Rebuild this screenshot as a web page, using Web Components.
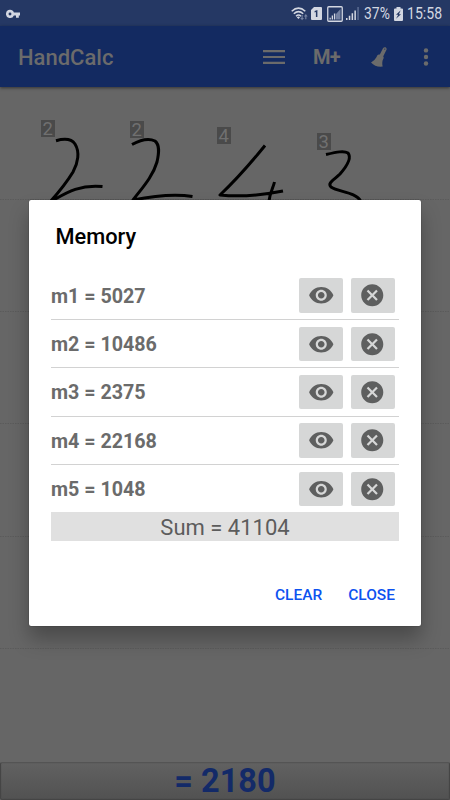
<!DOCTYPE html>
<html lang="en">
<head>
<meta charset="utf-8">
<title>HandCalc</title>
<style>
  html, body {
    margin: 0;
    height: 100%;
    overflow: hidden;
    background: #666;
    font-family: Roboto, "Liberation Sans", sans-serif;
  }
</style>
</head>
<body>
<hand-calc>
  <status-bar slot="status" battery="37%" time="15:58"></status-bar>
  <app-bar slot="bar">HandCalc</app-bar>
  <ink-canvas slot="canvas">
    <ink-tag x="41" y="120">2</ink-tag>
    <ink-tag x="130" y="121">2</ink-tag>
    <ink-tag x="217" y="127">4</ink-tag>
    <ink-tag x="317" y="132.500">3</ink-tag>
  </ink-canvas>
  <result-bar slot="result">= 2180</result-bar>
  <memory-dialog slot="dialog" heading="Memory">
    <memory-row>m1 = 5027</memory-row>
    <memory-row>m2 = 10486</memory-row>
    <memory-row>m3 = 2375</memory-row>
    <memory-row>m4 = 22168</memory-row>
    <memory-row>m5 = 1048</memory-row>
    <span slot="sum">Sum = 41104</span>
    <flat-button slot="actions">CLEAR</flat-button>
    <flat-button slot="actions">CLOSE</flat-button>
  </memory-dialog>
</hand-calc>

<script>
// Small helper: every element renders its markup once into an open root
class BaseElement extends HTMLElement {
  connectedCallback() {
    if (this.shadowRoot) return;
    this.attachShadow({ mode: 'open' });
    this.shadowRoot.innerHTML = this.render();
  }
}

// Page shell
class HandCalc extends BaseElement {
  render() {
    return `
      <style>
        :host {
          display: flex;
          flex-direction: column;
          height: 800px;
          width: 450px;
          position: relative;
        }
      </style>
      <slot name="status"></slot>
      <slot name="bar"></slot>
      <slot name="canvas"></slot>
      <slot name="result"></slot>
      <slot name="dialog"></slot>
    `;
  }
}

class StatusBar extends BaseElement {
  render() {
    return `
      <style>
        :host {
          display: flex;
          align-items: center;
          box-sizing: border-box;
          height: 26px;
          padding: 1px 8px 0 6px;
          background: #253864;
          color: #d3d7e1;
          font-size: 16px;
        }
        svg { display: block; flex: none; fill: #d3d7e1; }
        .gap { flex: 1; }
        .wifi { margin-right: 2px; }
        .sim { margin-right: 5px; }
        .boxed { margin-right: 3px; }
        .signal { margin-right: 5px; }
        .text {
          display: inline-block;
          line-height: 28px;
          white-space: nowrap;
          transform-origin: 0 50%;
        }
        .battery { width: 26px; margin-right: 4px; }
        .battery span { transform: scaleX(.87); }
        .time { width: 35px; margin-left: 4px; }
        .time span { transform: scaleX(.88); }
      </style>
      <svg width="15" height="10" viewBox="0 0 15 10">
        <path fill-rule="evenodd" d="M4 .8a4.1 4.1 0 0 1 3.9 2.8H14v2.8h-1.2v2.4H10V6.400H7.900A4.100 4.100 0 1 1 4 .8zM4 3.500a1.400 1.400 0 1 0 0 2.900a1.400 1.400 0 0 0 0-2.900z"/>
      </svg>
      <span class="gap"></span>
      <svg class="wifi" width="18" height="14" viewBox="0 0 18 14">
        <g fill="none" stroke="#d3d7e1" stroke-width="1.500">
          <path d="M.7 4.300Q7.500-2 14.300 4.300"/>
          <path d="M2.800 6.800Q7.500 2.500 12.200 6.800"/>
          <path d="M5 9.200Q7.500 6.900 10 9.200"/>
        </g>
        <path d="M5.800 10.200Q7.500 9 9 10.200L7.500 12z"/>
        <path fill="#7482a2" d="M10.500 8h1.200v3h1.300l-1.900 2.300L9.200 11h1.300zM14.200 12.300V9.500h-1.300l1.900-2.400 1.900 2.400h-1.300v2.800z"/>
      </svg>
      <svg class="sim" width="11" height="13" viewBox="0 0 11 13">
        <path d="M3 0h7a1 1 0 0 1 1 1v11a1 1 0 0 1-1 1H1a1 1 0 0 1-1-1V3z"/>
        <path fill="#253864" d="M3.600 3.900L6.400 3v7H4.900V5l-1.300.4z"/>
      </svg>
      <svg class="boxed" width="16" height="16" viewBox="0 0 16 16">
        <rect x=".75" y=".75" width="14.500" height="14.500" rx="1" fill="none" stroke="#d3d7e1" stroke-width="1.300"/>
        <path fill="#7482a2" d="M9 8l4.500-5v10.500H9z"/>
        <path d="M2.500 11.700h1.300v1.800H2.500zM4.700 9.600H6v3.900H4.700zM6.900 7.500h1.400v6H6.900z"/>
      </svg>
      <svg class="signal" width="13" height="13" viewBox="0 0 13 13">
        <path d="M0 11h1.500v2H0zM2.800 8.800h1.500V13H2.800zM5.600 6.300h1.500V13H5.600zM8.400 3.500h1.500V13H8.400z"/>
        <path fill="#65759a" d="M11.400 0h1.300v13h-1.300z"/>
      </svg>
      <span class="text battery"><span class="text">${this.getAttribute('battery')}</span></span>
      <svg width="9" height="14" viewBox="0 0 9 14">
        <path d="M2.500 0h4v1.500H8a1 1 0 0 1 1 1V13a1 1 0 0 1-1 1H1a1 1 0 0 1-1-1V2.500a1 1 0 0 1 1-1h1.500z"/>
        <path fill="#253864" d="M6.700 3.300L2 7.700h2.200L2 11.800l5-4.600H4.900z"/>
      </svg>
      <span class="text time"><span class="text">${this.getAttribute('time')}</span></span>
    `;
  }
}

class AppBar extends BaseElement {
  render() {
    return `
      <style>
        :host {
          display: flex;
          align-items: center;
          box-sizing: border-box;
          height: 61px;
          padding: 0 21px 0 18px;
          background: #132a61;
          color: #6b6b6b;
          box-shadow: 0 1px 3px rgba(0, 0, 0, .5);
          z-index: 1;
        }
        .title { flex: 1; font-size: 22px; font-weight: 500; padding-top: 2px; }
        svg { display: block; flex: none; fill: #6b6b6b; }
        .plus { font-size: 20px; font-weight: 700; width: 27px; margin: 0 31px 0 28px; letter-spacing: -.7px; }
        .broom { margin-right: 36px; }
      </style>
      <span class="title"><slot></slot></span>
      <svg width="22" height="14" viewBox="0 0 22 14">
        <path d="M0 0h22v2.200H0zM0 5.900h22v2.200H0zM0 11.800h22V14H0z"/>
      </svg>
      <span class="plus">M+</span>
      <svg class="broom" width="16" height="20" viewBox="0 0 16 20">
        <path d="M12 1.300Q13-.2 14.500.3Q16 1 15.500 2.800L12.200 9.600Q12.900 10.400 12.600 11.200L11.600 13.500Q10.900 16.500 11.700 19.600Q4.500 20.500 0 15.500Q3.500 14 5.400 10.300L6.400 8.300Q7 7.300 8.800 7.600z"/>
        <circle cx="13.800" cy="2.100" r=".6" fill="#132a61"/>
      </svg>
      <svg width="6" height="18" viewBox="0 0 6 18">
        <circle cx="3" cy="2.400" r="2.200"/><circle cx="3" cy="9" r="2.200"/><circle cx="3" cy="15.500" r="2.200"/>
      </svg>
    `;
  }
}

// Writing area: ruled lines, the pen strokes and the recognised digits
class InkCanvas extends BaseElement {
  render() {
    return `
      <style>
        :host { display: block; flex: 1; min-height: 0; background: #666; }
        svg { display: block; margin-top: -87px; }
      </style>
      <svg width="450" height="762" viewBox="0 0 450 762">
        <g stroke="#5b5b5b" stroke-width="1" stroke-dasharray="1.500 1">
          <path d="M0 199.500H450M0 311.500H450M0 423.500H450M0 536.500H450M0 648.500H450"/>
        </g>
        <g fill="none" stroke="#000" stroke-width="3" stroke-linejoin="round">
          <path d="M56 140.700C64 138.500 71 138 75 144C80 152 78 163 73 172C67 182 58 193 50 202C63 195 77 184 102.500 186.500"/>
          <path d="M132 144.500C142 139 150 138.500 155 141C160 145 159 153 157 162C153 176 143 187 133 200C148 197 174 193.500 192.500 196.500"/>
          <path d="M265 145.500C250 164 238 178 220 195C240 197 263 195 283 191M274.500 182C273 188 270 193 269 201"/>
          <path d="M326 154.500C337 152 344 150.500 348 153C352 158 347 166 340 174C334 180 327 183 331 187C338 192 356 192 360.500 201"/>
        </g>
      </svg>
      <slot></slot>
    `;
  }
}

class InkTag extends BaseElement {
  render() {
    return `
      <style>
        :host {
          position: absolute;
          left: ${this.getAttribute('x')}px;
          top: ${this.getAttribute('y')}px;
          width: 13.500px;
          height: 17px;
          background: #4a4a4a;
          color: #707070;
          font-size: 18.500px;
          line-height: 18px;
          text-align: center;
        }
      </style>
      <slot></slot>
    `;
  }
}

class ResultBar extends BaseElement {
  render() {
    return `
      <style>
        :host {
          display: block;
          box-sizing: border-box;
          height: 38px;
          z-index: 1;
          border: 1px solid #454545;
          border-top-color: #545454;
          border-radius: 2px;
          background: linear-gradient(#616161, #525252);
          box-shadow: inset 0 0 1px #444;
          color: #132a68;
          font-size: 32.500px;
          font-weight: 700;
          line-height: 36px;
          text-align: center;
        }
      </style>
      <slot></slot>
    `;
  }
}

class MemoryDialog extends BaseElement {
  render() {
    return `
      <style>
        :host {
          display: flex;
          flex-direction: column;
          box-sizing: border-box;
          position: absolute;
          left: 29px;
          top: 200px;
          z-index: 2;
          width: 392px;
          height: 425.500px;
          padding: 0 22px;
          border-radius: 2px;
          background: #fff;
          box-shadow: 0 0 1px rgba(0, 0, 0, .8), 0 13px 20px rgba(0, 0, 0, .28);
        }
        h2 {
          margin: 22px 0 0 4.500px;
          height: 49.700px;
          font-size: 21.800px;
          font-weight: 500;
          line-height: 29px;
          color: #000;
        }
        .sum {
          height: 29.500px;
          margin-top: -1.200px;
          background: #e0e0e0;
          color: #5c5c5c;
          font-size: 22px;
          line-height: 32px;
          text-align: center;
        }
        .actions {
          display: flex;
          justify-content: flex-end;
          gap: 26px;
          margin: 42.500px 4px 0 0;
        }
      </style>
      <h2>${this.getAttribute('heading')}</h2>
      <slot></slot>
      <div class="sum"><slot name="sum"></slot></div>
      <div class="actions"><slot name="actions"></slot></div>
    `;
  }
}

class MemoryRow extends BaseElement {
  render() {
    return `
      <style>
        :host {
          display: flex;
          align-items: center;
          box-sizing: border-box;
          height: 48.300px;
          padding: .6px 4.500px 0 0;
          border-bottom: 1px solid #d2d2d2;
        }
        :host(:last-of-type) { border-bottom-color: transparent; }
        .text { flex: 1; color: #6b6b6b; font-size: 19.700px; font-weight: 700; padding-top: 1px; }
        icon-button + icon-button { margin-left: 8px; }
      </style>
      <span class="text"><slot></slot></span>
      <icon-button icon="eye"></icon-button>
      <icon-button icon="remove"></icon-button>
    `;
  }
}

const icons = {
  eye: 'M12 4.500C7 4.500 2.730 7.610 1 12c1.730 4.390 6 7.500 11 7.500s9.270-3.110 11-7.500c-1.730-4.390-6-7.500-11-7.500zM12 17c-2.760 0-5-2.240-5-5s2.240-5 5-5 5 2.240 5 5-2.240 5-5 5zm0-8c-1.660 0-3 1.340-3 3s1.340 3 3 3 3-1.340 3-3-1.340-3-3-3z',
  remove: 'M12 2C6.470 2 2 6.470 2 12s4.470 10 10 10 10-4.470 10-10S17.530 2 12 2zm5 13.590L15.590 17 12 13.410 8.410 17 7 15.590 10.590 12 7 8.410 8.410 7 12 10.590 15.590 7 17 8.410 13.410 12 17 15.590z'
};

class IconButton extends BaseElement {
  render() {
    return `
      <style>
        :host {
          display: flex;
          align-items: center;
          justify-content: center;
          width: 43.700px;
          height: 34.500px;
          border-radius: 2px;
          background: #d6d7d7;
        }
        svg { fill: #5e5f5f; }
      </style>
      <svg width="26.500" height="26.500" viewBox="0 0 24 24"><path d="${icons[this.getAttribute('icon')]}"/></svg>
    `;
  }
}

class FlatButton extends BaseElement {
  render() {
    return `
      <style>
        :host {
          display: block;
          color: #0d52f0;
          font-size: 15.500px;
          font-weight: 500;
          line-height: 22px;
        }
      </style>
      <slot></slot>
    `;
  }
}

customElements.define('hand-calc', HandCalc);
customElements.define('status-bar', StatusBar);
customElements.define('app-bar', AppBar);
customElements.define('ink-canvas', InkCanvas);
customElements.define('ink-tag', InkTag);
customElements.define('result-bar', ResultBar);
customElements.define('icon-button', IconButton);
customElements.define('flat-button', FlatButton);
customElements.define('memory-row', MemoryRow);
customElements.define('memory-dialog', MemoryDialog);
</script>
</body>
</html>
